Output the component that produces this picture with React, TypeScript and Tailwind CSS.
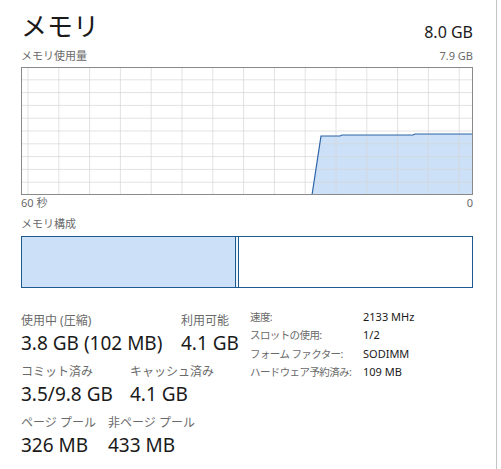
import React from 'react';

const font = { fontFamily: '"Noto Sans", "Noto Sans CJK JP", sans-serif' };

const gridX = Array.from({ length: 15 }, (_, i) => 7 + i * 30.8);
const gridY = Array.from({ length: 9 }, (_, i) => (i + 1) * 12.8);

function UsageGraph() {
    const top = [
        [291, 128],
        [300, 69],
        [319, 69],
        [321, 68],
        [392, 68],
        [394, 67],
        [452, 67],
    ];
    const pts = top.map((p) => p.join(',')).join(' ');
    return (
        <svg width="452" height="128" className="block">
            <rect x="0" y="0" width="452" height="128" fill="#ffffff" />
            <polygon points={`${pts} 452,128`} fill="#cce0f8" />
            {gridX.map((x) => (
                <line key={x} x1={x} y1="0" x2={x} y2="128" stroke="#d6d6d6" strokeOpacity="0.7" strokeWidth="1" />
            ))}
            {gridY.map((y) => (
                <line key={y} x1="0" y1={y} x2="452" y2={y} stroke="#d6d6d6" strokeOpacity="0.7" strokeWidth="1" />
            ))}
            <polyline points={pts} fill="none" stroke="#2b64a6" strokeWidth="1.2" />
            <rect x="0.5" y="0.5" width="451" height="127" fill="none" stroke="#8a8a8a" strokeWidth="1" />
        </svg>
    );
}

function Stat({ label, value, width }: { label: string; value: string; width?: string }) {
    return (
        <div className={`flex flex-col whitespace-nowrap ${width ?? ''}`}>
            <span className="text-[12px] leading-[16px] text-[#6a6a6a]">{label}</span>
            <span className="text-[19px] leading-[24px] text-[#1a1a1a] mt-[2px]">{value}</span>
        </div>
    );
}

const details = [
    ['速度:', '2133 MHz'],
    ['スロットの使用:', '1/2'],
    ['フォーム ファクター:', 'SODIMM'],
    ['ハードウェア予約済み:', '109 MB'],
];

export default function App() {
    return (
        <div className="w-[501px] h-[469px] bg-white flex overflow-hidden" style={font}>
            <div className="w-[496px] pl-[21px] pt-[9px]">
                <div className="w-[452px] flex items-end justify-between">
                    <h1 className="text-[26px] leading-[34px] text-[#1a1a1a] font-normal">メモリ</h1>
                    <span className="text-[16px] leading-[20px] text-[#1a1a1a] mb-[1px]">8.0 GB</span>
                </div>
                <div className="w-[452px] flex justify-between mt-[6px] text-[11px] leading-[14px] text-[#6a6a6a]">
                    <span>メモリ使用量</span>
                    <span>7.9 GB</span>
                </div>
                <div className="mt-[4px]">
                    <UsageGraph />
                </div>
                <div className="w-[452px] flex justify-between mt-[1px] text-[11px] leading-[14px] text-[#6a6a6a]">
                    <span>60 秒</span>
                    <span>0</span>
                </div>
                <div className="mt-[7px] text-[11px] leading-[14px] text-[#6a6a6a]">メモリ構成</div>
                <div className="mt-[5px] w-[452px] h-[52px] border border-[#1d5a90] flex">
                    <div className="w-[214px] bg-[#cce0f8] border-r border-[#1d5a90]" />
                    <div className="w-[2px] bg-[#eef5fd]" />
                    <div className="flex-1 border-l border-[#1d5a90]" />
                </div>
                <div className="mt-[25px] flex items-start">
                    <div className="w-[229px] flex flex-col gap-[9px]">
                        <div className="flex">
                            <Stat label="使用中 (圧縮)" value="3.8 GB (102 MB)" width="w-[160px]" />
                            <Stat label="利用可能" value="4.1 GB" />
                        </div>
                        <div className="flex">
                            <Stat label="コミット済み" value="3.5/9.8 GB" width="w-[109px]" />
                            <Stat label="キャッシュ済み" value="4.1 GB" />
                        </div>
                        <div className="flex">
                            <Stat label="ページ プール" value="326 MB" width="w-[87px]" />
                            <Stat label="非ページ プール" value="433 MB" />
                        </div>
                    </div>
                    <div className="flex flex-col -mt-[5px]">
                        {details.map(([k, v]) => (
                            <div key={k} className="flex whitespace-nowrap leading-[18.4px]">
                                <span className="w-[113px] text-[10.5px] text-[#6a6a6a] tracking-[-0.6px]">{k}</span>
                                <span className="text-[11px] text-[#1a1a1a]">{v}</span>
                            </div>
                        ))}
                    </div>
                </div>
            </div>
            <div className="w-[1px] bg-[#c4c4c4]" />
            <div className="flex-1 bg-white" />
        </div>
    );
}
